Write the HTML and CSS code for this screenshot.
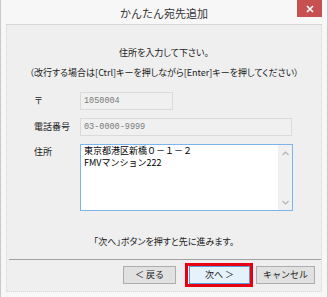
FILE: index.html
```html
<!DOCTYPE html>
<html lang="ja">
<head>
    <meta charset="UTF-8">
    <meta name="viewport" content="width=device-width, initial-scale=1.0">
    <title>かんたん宛先追加</title>
    <link rel="stylesheet" href="styles.css">
</head>
<body>
    <div class="window">
        <div class="titlebar">
            <span></span>
            <span class="title">かんたん宛先追加</span>
            <button class="close" type="button" aria-label="閉じる">
                <svg width="8" height="8" viewBox="0 0 8 8"><path d="M1 1L7 7M7 1L1 7" stroke="#fff" stroke-width="1.6"/></svg>
            </button>
        </div>

        <div class="panel">
            <div class="intro">
                <p>住所を入力して下さい。</p>
                <p>（改行する場合は[Ctrl]キーを押しながら[Enter]キーを押してください）</p>
            </div>

            <div class="fields">
                <div class="row">
                    <label class="label">〒</label>
                    <div class="field short">1050004</div>
                </div>
                <div class="row">
                    <label class="label">電話番号</label>
                    <div class="field">03-0000-9999</div>
                </div>
                <div class="row top">
                    <label class="label">住所</label>
                    <div class="address">
                        <div class="address-text">東京都港区新橋０－１－２<br>FMVマンション222</div>
                        <div class="scrollbar">
                            <svg width="7" height="5" viewBox="0 0 7 5"><path d="M0.5 4L3.5 1L6.5 4" fill="none" stroke="#b4b4b4" stroke-width="1.2"/></svg>
                            <svg width="7" height="5" viewBox="0 0 7 5"><path d="M0.5 1L3.5 4L6.5 1" fill="none" stroke="#b4b4b4" stroke-width="1.2"/></svg>
                        </div>
                    </div>
                </div>
            </div>

            <p class="hint">「次へ」ボタンを押すと先に進みます。</p>
            <div class="separator"></div>

            <div class="buttons">
                <button type="button" class="btn back">＜ 戻る</button>
                <button type="button" class="btn next">次へ ＞</button>
                <button type="button" class="btn cancel">キャンセル</button>
            </div>
        </div>
    </div>
</body>
</html>
```

FILE: styles.css
```css
* {
    box-sizing: border-box;
}
body {
    margin: 0;
    background: #f7f7f7;
    font-family: "Noto Sans CJK JP", "Noto Sans", sans-serif;
    font-size: 9px;
    color: #1a1a1a;
}
p {
    margin: 0;
}
.window {
    width: 328px;
    height: 297px;
    border-left: 1px solid #c3cad0;
    border-right: 1px solid #c3cad0;
    background: #f7f7f7;
    display: flex;
    flex-direction: column;
}
.titlebar {
    height: 24px;
    display: grid;
    grid-template-columns: 1fr auto 1fr;
    align-items: start;
}
.title {
    font-size: 11px;
    line-height: 26px;
    color: #333;
}
.close {
    justify-self: end;
    margin-right: 5px;
    width: 25px;
    height: 17px;
    border: none;
    padding: 0;
    background: #c75050;
    display: flex;
    align-items: center;
    justify-content: center;
}
.panel {
    margin: 0 5px 0 5px;
    height: 268px;
    background: #efefef;
    border: 1px dotted #d6d6d6;
    border-top-style: solid;
    padding: 18px 0 0 0;
}
.intro {
    text-align: center;
    line-height: 20px;
    font-feature-settings: "palt";
}
.fields {
    margin-top: 9px;
    display: flex;
    flex-direction: column;
    gap: 8px;
    padding-left: 27px;
}
.row {
    display: flex;
    align-items: center;
}
.row.top {
    align-items: flex-start;
}
.label {
    width: 46px;
    line-height: 18px;
}
.top .label {
    line-height: 16px;
}
.field {
    width: 212px;
    height: 18px;
    border: 1px solid #dadada;
    background: #f0f0f0;
    color: #7a7a7a;
    font-family: "Liberation Mono", monospace;
    font-size: 8.5px;
    line-height: 16px;
    padding-left: 3px;
}
.field.short {
    width: 93px;
}
.address {
    width: 213px;
    height: 67px;
    border: 1px solid #7eb4ea;
    background: #fff;
    display: flex;
}
.address-text {
    flex: 1;
    padding: 0 3px;
    line-height: 12px;
    color: #000;
}
.scrollbar {
    width: 14px;
    background: #f0f0f0;
    display: flex;
    flex-direction: column;
    justify-content: space-between;
    align-items: center;
    padding: 6px 0 5px;
}
.hint {
    margin-top: 21px;
    text-align: center;
    line-height: 20px;
    font-feature-settings: "palt";
}
.separator {
    margin: 7px 0 0 2px;
    height: 1px;
    background: #a0a0a0;
}
.buttons {
    margin-top: 6px;
    display: flex;
    justify-content: flex-end;
    padding-right: 6px;
}
.btn {
    height: 18px;
    border: 1px solid #adadad;
    background: #e1e1e1;
    font-family: "Noto Sans CJK JP", "Noto Sans", sans-serif;
    font-size: 9px;
    color: #1a1a1a;
    padding: 0;
    line-height: 16px;
}
.back {
    width: 53px;
}
.next {
    width: 61px;
    margin-left: 13px;
    border-color: #5b9ee0;
    background: #e5f1fb;
    position: relative;
}
.next::after {
    content: "";
    position: absolute;
    left: -5px;
    right: -4px;
    top: -4px;
    bottom: -4px;
    border: 3px solid #e60012;
}
.cancel {
    width: 59px;
    margin-left: 6px;
}
```
